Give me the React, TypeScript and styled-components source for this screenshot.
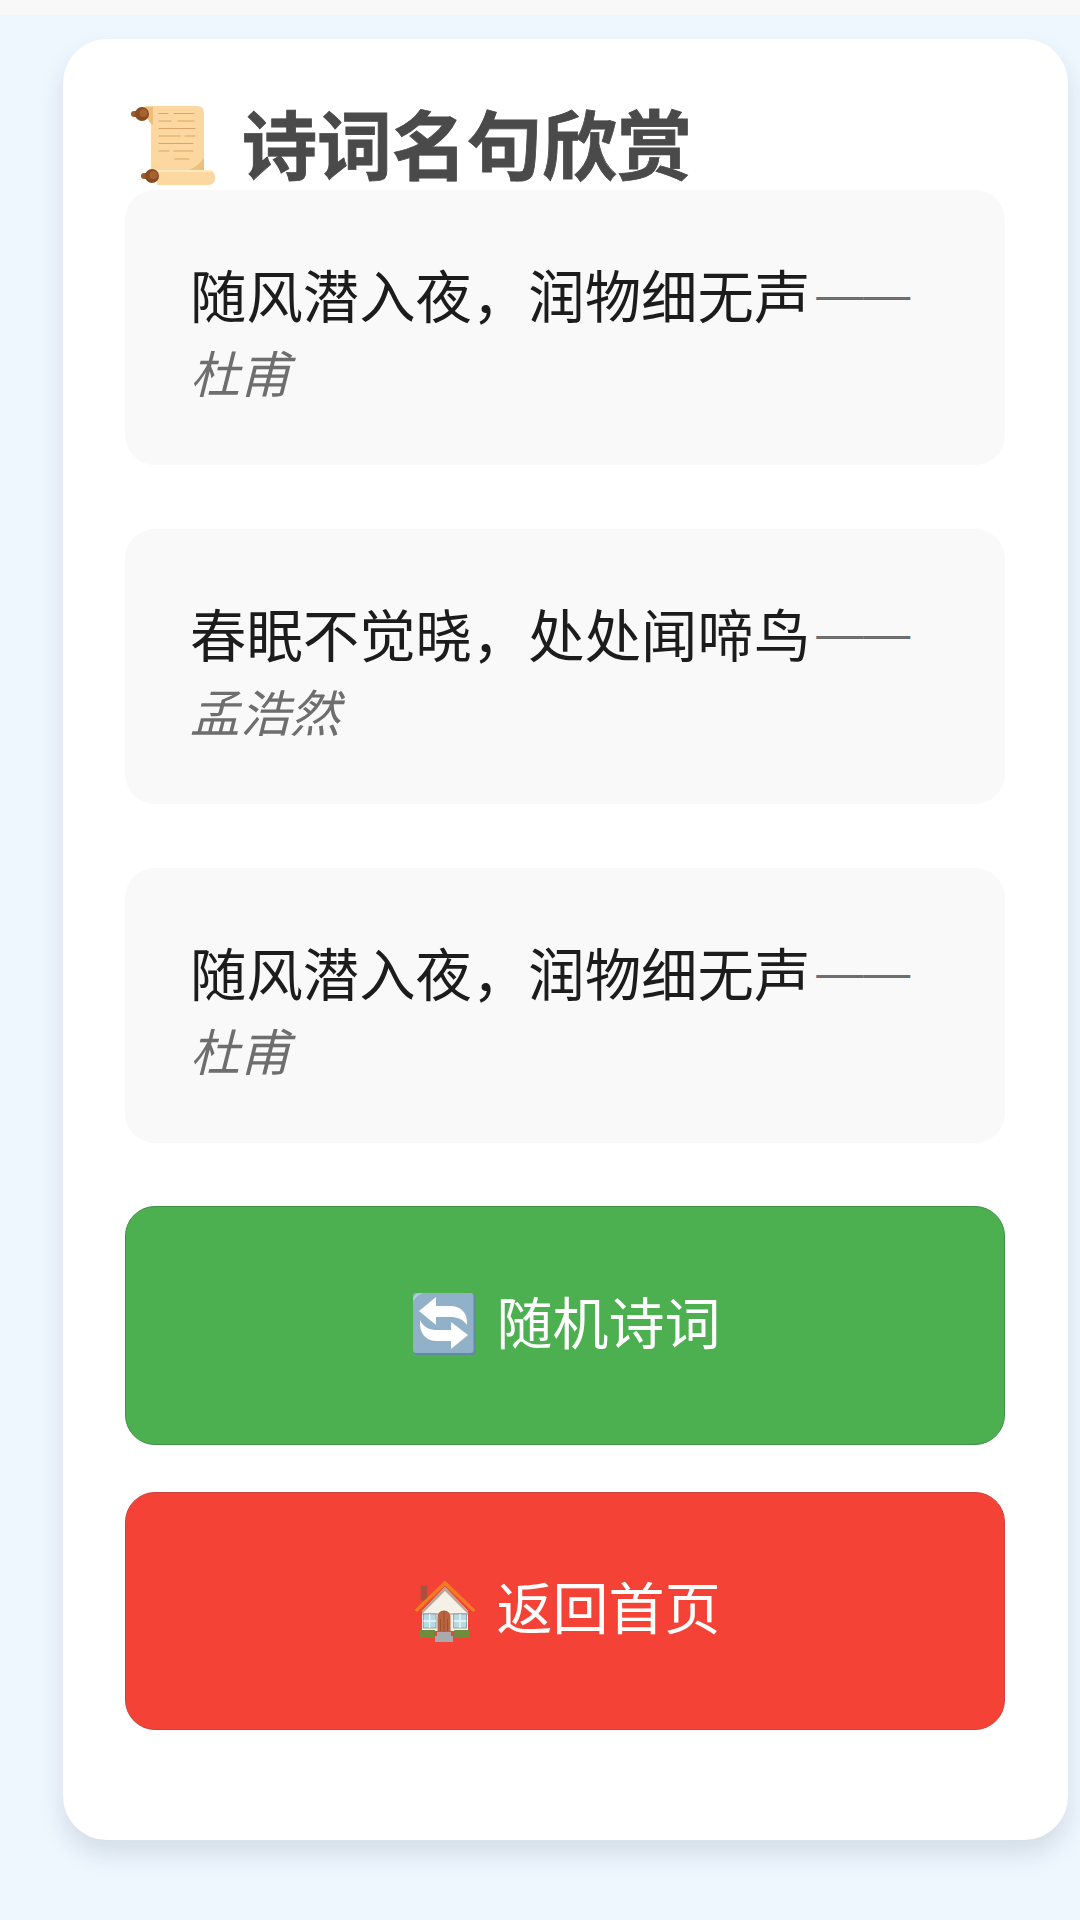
import React from "react";
import styled, { createGlobalStyle } from "styled-components";

const Global = createGlobalStyle`
  html, body { margin: 0; padding: 0; background: #eef6fe; }
  * { box-sizing: border-box; }
  body { font-family: "Noto Sans CJK SC", "Noto Sans", sans-serif; }
`;

const Page = styled.div`
  width: 1080px;
  height: 1920px;
  overflow: hidden;
  background: #eef6fe;
`;

const StatusStrip = styled.div`
  height: 15px;
  background: #f8f8f8;
`;

const Card = styled.main`
  width: 1005px;
  height: 1801px;
  margin: 24px 0 0 63px;
  padding: 62px 63px 0 62px;
  background: #fff;
  border-radius: 44px;
  box-shadow: 0 14px 24px rgba(40, 60, 80, 0.13);
`;

const Title = styled.h1`
  display: flex;
  align-items: center;
  gap: 25px;
  height: 89px;
  margin: 0;
  padding-left: 4px;
  font-size: 75px;
  line-height: 89px;
  font-weight: 700;
  color: #4a4a4a;
`;

const TitleText = styled.span`
  margin-bottom: 8px;
  -webkit-text-stroke: 0.8px #4a4a4a;
`;

const Quote = styled.section`
  height: 275px;
  margin-bottom: 64px;
  padding: 66px 65px 0;
  background: #f9f9f9;
  border-radius: 30px;
  font-size: 56.4px;
  line-height: 75px;
  color: #1c1c1c;

  &:last-of-type {
    margin-bottom: 63px;
  }
`;

const Author = styled.span`
  font-size: 50px;
  line-height: 1;
  font-style: italic;
  color: #6e6e6e;
`;

const Dash = styled.span`
  display: inline-block;
  margin-left: 6px;
  font-family: "Liberation Sans", sans-serif;
  font-size: 47px;
  font-style: normal;
  line-height: 1;
  vertical-align: 8px;
`;

const ActionButton = styled.button<{ $tone: "green" | "red" }>`
  display: flex;
  align-items: center;
  justify-content: center;
  gap: 19px;
  width: 880px;
  height: 238.5px;
  margin-bottom: 47px;
  padding: 0;
  border: 1.5px solid ${(p) => (p.$tone === "green" ? "#3f8f43" : "#c9433a")};
  border-radius: 30px;
  background: ${(p) => (p.$tone === "green" ? "#4caf50" : "#f44336")};
  color: #fff;
  font-family: inherit;
  font-size: 56px;
`;

const ButtonLabel = styled.span`
  margin-bottom: 12px;
`;

const TitleIcon = styled.svg`
  width: 88px;
  height: 88px;
  flex: none;
`;

const ButtonIcon = styled.svg`
  width: 68px;
  height: 68px;
  flex: none;
`;

const ScrollIcon = () => (
  <TitleIcon viewBox="0 0 88 88">
    <path d="M21 4H68q7 0 7 7V72H22V20q0-10-6-16z" fill="#fcd8a0" />
    <path d="M12 5h12v18q-3-1-5-6-3-8-7-12z" fill="#eebd7d" />
    <path d="M50 70q16-1 25-14v16z" fill="#ecc07f" />
    <path d="M28 68H79q7 0 7 7.500T79 83H28z" fill="#fcd8a0" />
    <path d="M28 68H79q3 0 4 2H28z" fill="#ffe9c4" />
    <g stroke="#d7a565" strokeWidth="1.200" strokeLinecap="round">
      <path d="M30 11.500h9M45 11.500h20M30 19h12M49 19h16M30 26.500h36M30 34h21M56 34h10M30 41.500h34M30 49h10M45 49h19M46 57h14" />
    </g>
    <rect x="2" y="9" width="8" height="6" rx="3" fill="#9a5a2b" />
    <circle cx="13" cy="12" r="7" fill="#8a4b20" />
    <circle cx="14.500" cy="11" r="4" fill="#a4632f" />
    <rect x="12" y="71" width="8" height="6" rx="3" fill="#9a5a2b" />
    <circle cx="23" cy="74" r="7" fill="#8a4b20" />
    <circle cx="24.500" cy="73" r="4" fill="#a4632f" />
  </TitleIcon>
);

const RepeatIcon = () => (
  <ButtonIcon viewBox="0 0 68 68">
    <rect x="4.500" y="3" width="61" height="61" rx="3" fill="#5f8ba8" />
    <rect x="3" y="2" width="60.500" height="60" rx="3" fill="#91b1c8" />
    <path d="M3 10q0-8 8-8h2q-6 2-10 8z" fill="#b7cedd" />
    <path d="M26 6v9H40C51 15 58 22 57 34 53 28 47 26 40 26H26v8L9 20z" fill="#fff" />
    <path d="M41 58V50H27C16 50 9 43 10 29c4 8 10 10 17 10H41V31L58 44z" fill="#fff" />
  </ButtonIcon>
);

const HouseIcon = () => (
  <ButtonIcon viewBox="0 0 68 68">
    <rect x="10.700" y="8.500" width="6.600" height="15" fill="#a5533f" />
    <path d="M12 34 35 10l23 24v20H12z" fill="#f6f1e7" />
    <path d="M12 34 35 10l23 24v3L35 14 12 37z" fill="#b9a596" />
    <path d="M5 33 35 4l30 29-2 1.500L35 8 7 34.500z" fill="#ef7d22" stroke="#ef7d22" strokeWidth="1" />
    <rect x="12" y="36" width="46" height="2" fill="#c9c2b6" />
    <rect x="13.300" y="37" width="12.700" height="14" fill="#b7dbe4" stroke="#7f929b" strokeWidth=".8" />
    <rect x="43.700" y="37" width="12.700" height="14" fill="#b7dbe4" stroke="#7f929b" strokeWidth=".8" />
    <path d="M19.600 37v14M13.300 44h12.700M50 37v14M43.700 44h12.700" stroke="#eef6f8" strokeWidth="1.300" />
    <path d="M27.500 55V41q0-7.500 6.500-7.500T40.500 41v14z" fill="#b8643f" />
    <path d="M34 34v21M30.500 42v12M37.500 42v12" stroke="#8f4a2b" strokeWidth=".7" />
    <rect x="9.300" y="53" width="16" height="8" rx="1" fill="#6f8b3d" />
    <rect x="44" y="53" width="16" height="8" rx="1" fill="#6f8b3d" />
    <path d="M27 55h14v4h2v6H25v-6h2z" fill="#a9a9ae" />
  </ButtonIcon>
);

const quotes = [
  { line: "随风潜入夜，润物细无声", author: "杜甫" },
  { line: "春眠不觉晓，处处闻啼鸟", author: "孟浩然" },
  { line: "随风潜入夜，润物细无声", author: "杜甫" },
];

export default function App() {
  return (
    <Page>
      <Global />
      <StatusStrip />
      <Card>
        <Title>
          <ScrollIcon />
          <TitleText>诗词名句欣赏</TitleText>
        </Title>
        {quotes.map((q, i) => (
          <Quote key={i}>
            {q.line}
            <Author>
              <Dash>——</Dash> {q.author}
            </Author>
          </Quote>
        ))}
        <ActionButton $tone="green">
          <RepeatIcon />
          <ButtonLabel>随机诗词</ButtonLabel>
        </ActionButton>
        <ActionButton $tone="red">
          <HouseIcon />
          <ButtonLabel>返回首页</ButtonLabel>
        </ActionButton>
      </Card>
    </Page>
  );
}
